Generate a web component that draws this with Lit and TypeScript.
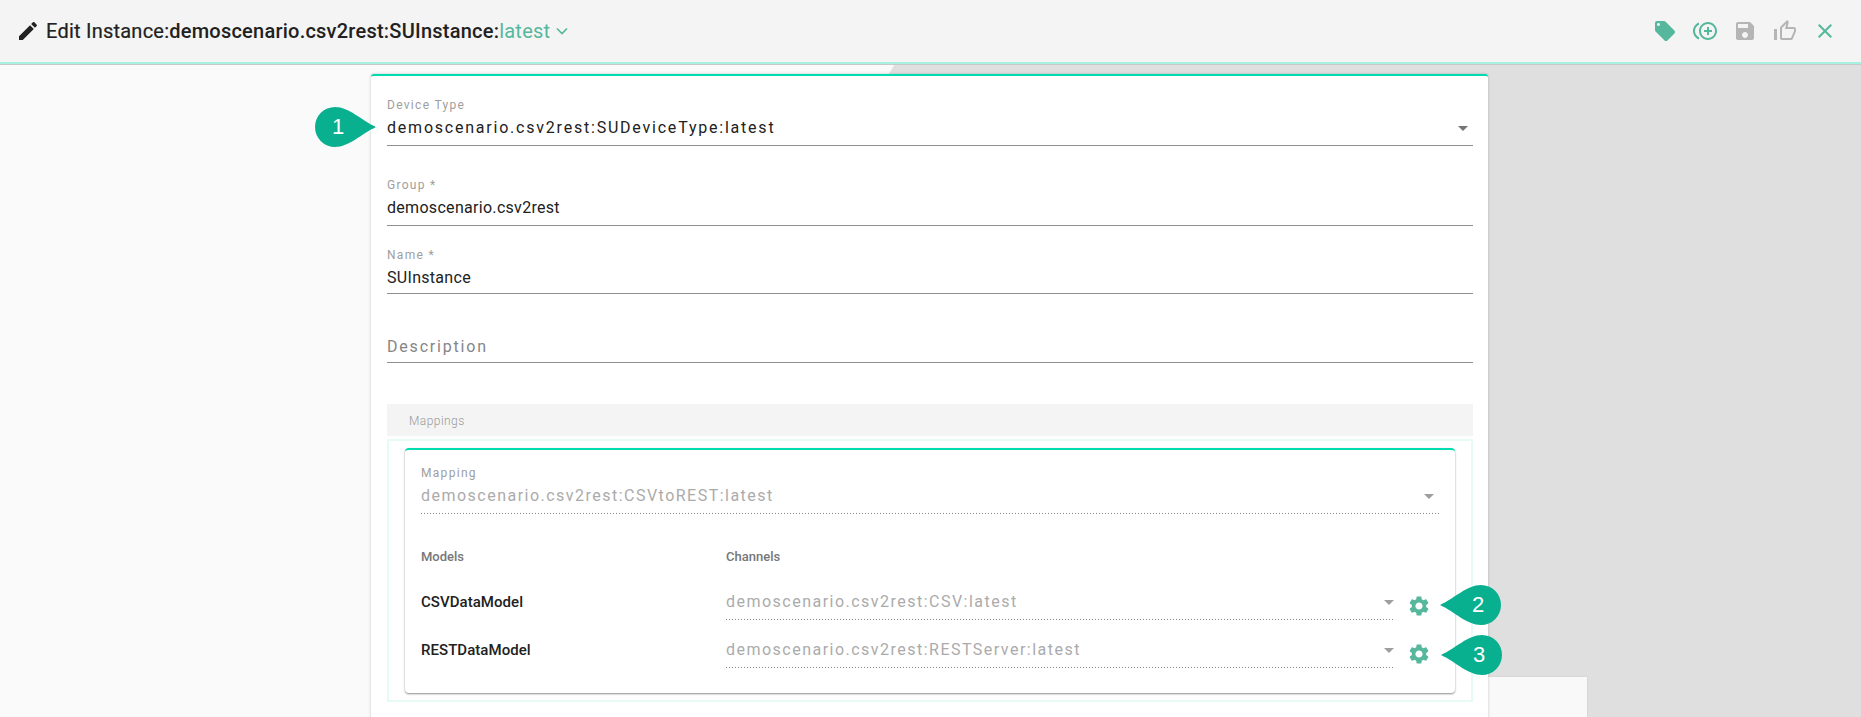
import { LitElement, html, css, svg } from "lit";
import { customElement } from "lit/decorators.js";

const P = {
  edit: "M3 17.25V21h3.75L17.81 9.94l-3.75-3.75L3 17.25zM20.71 7.04c.39-.39.39-1.02 0-1.41l-2.34-2.34c-.39-.39-1.02-.39-1.41 0l-1.83 1.83 3.75 3.75 1.83-1.83z",
  tag: "M21.41 11.58l-9-9C12.05 2.22 11.55 2 11 2H4c-1.1 0-2 .9-2 2v7c0 .55.22 1.05.59 1.42l9 9c.36.36.86.58 1.41.58.55 0 1.05-.22 1.41-.59l7-7c.37-.36.59-.86.59-1.41 0-.55-.23-1.06-.59-1.42zM5.5 7C4.67 7 4 6.33 4 5.5S4.67 4 5.5 4 7 4.67 7 5.5 6.33 7 5.5 7z",
  dup: "M16 8h-2v3h-3v2h3v3h2v-3h3v-2h-3zM2 12c0-2.79 1.64-5.2 4.01-6.32V3.52C2.52 4.76 0 8.09 0 12s2.52 7.24 6.01 8.48v-2.16C3.64 17.2 2 14.79 2 12zm13-9c-4.96 0-9 4.04-9 9s4.04 9 9 9 9-4.04 9-9-4.04-9-9-9zm0 16c-3.86 0-7-3.14-7-7s3.14-7 7-7 7 3.14 7 7-3.14 7-7 7z",
  save: "M17 3H5c-1.11 0-2 .9-2 2v14c0 1.1.89 2 2 2h14c1.1 0 2-.9 2-2V7l-4-4zm-5 16c-1.66 0-3-1.34-3-3s1.34-3 3-3 3 1.34 3 3-1.34 3-3 3zm3-10H5V5h10v4z",
  thumb: "M9 21h9c.83 0 1.54-.5 1.84-1.22l3.02-7.05c.09-.23.14-.47.14-.73v-2c0-1.1-.9-2-2-2h-6.31l.95-4.57.03-.32c0-.41-.17-.79-.44-1.06L14.17 1 7.58 7.59C7.22 7.95 7 8.45 7 9v10c0 1.1.9 2 2 2zM9 9l4.34-4.34L12 10h9v2l-3 7H9V9zM1 10h3v11H1z",
  close: "M19 6.41L17.59 5 12 10.59 6.41 5 5 6.41 10.59 12 5 17.59 6.41 19 12 13.41 17.59 19 19 17.59 13.41 12z",
  gear: "M19.14 12.94c.04-.3.06-.61.06-.94 0-.32-.02-.64-.07-.94l2.03-1.58c.18-.14.23-.41.12-.61l-1.92-3.32c-.12-.22-.37-.29-.59-.22l-2.39.96c-.5-.38-1.03-.7-1.62-.94l-.36-2.54c-.04-.24-.24-.41-.48-.41h-3.84c-.24 0-.43.17-.47.41l-.36 2.54c-.59.24-1.13.57-1.62.94l-2.39-.96c-.22-.08-.47 0-.59.22L2.74 8.87c-.12.21-.08.47.12.61l2.03 1.58c-.05.3-.09.63-.09.94s.02.64.07.94l-2.03 1.58c-.18.14-.23.41-.12.61l1.92 3.32c.12.22.37.29.59.22l2.39-.96c.5.38 1.03.7 1.62.94l.36 2.54c.05.24.24.41.48.41h3.84c.24 0 .44-.17.47-.41l.36-2.54c.59-.24 1.13-.56 1.62-.94l2.39.96c.22.08.47 0 .59-.22l1.92-3.32c.12-.22.07-.47-.12-.61l-2.01-1.58zM12 15.6c-1.98 0-3.6-1.62-3.6-3.6s1.62-3.6 3.6-3.6 3.6 1.62 3.6 3.6-1.62 3.6-3.6 3.6z",
};

const icon = (d: string, cls: string) => html`<svg class=${cls} viewBox="0 0 24 24">${svg`<path d=${d}></path>`}</svg>`;

const pin = (n: string, cls: string) => html`<div class="pin ${cls}">
  <svg viewBox="0 0 61 40"><path d="M20 0C34 0 46 13 61 20C46 27 34 40 20 40A20 20 0 0 1 20 0Z"></path></svg>
  <span>${n}</span>
</div>`;

@customElement("app-root")
export class AppRoot extends LitElement {
  static styles = css`
    :host { display: block; position: relative; width: 1861px; height: 717px; overflow: hidden; background: #dfdfdf; font-family: Roboto, "Liberation Sans", sans-serif; color: #212121; }
    .bg-left { position: absolute; left: 0; top: 0; width: 936px; height: 717px; background: #fafafa; clip-path: polygon(0 0, 100% 0, 477px 100%, 0 100%); }
    .bg-block { position: absolute; left: 1488px; top: 677px; width: 99px; height: 40px; background: #f9f9f9; box-shadow: 0 0 2px rgba(0,0,0,.1); }
    .head { position: relative; z-index: 2; height: 62px; box-sizing: content-box; border-bottom: 2px solid #a8f0df; background: #f4f4f4; display: flex; align-items: center; padding: 0 24px 0 16px; box-shadow: 0 1px 0 #c8c8c8; }
    .pencil { width: 24px; height: 24px; fill: #212121; margin-right: 6px; flex: none; }
    .title { font-size: 20px; font-weight: 400; line-height: 24px; white-space: nowrap; letter-spacing: .23px; color: #212121; -webkit-text-stroke: .2px #212121; }
    .title b { font-weight: 500; color: #212121; -webkit-text-stroke: 0; }
    .title .ver { color: #55b79b; font-weight: 400; -webkit-text-stroke: 0; }
    .chev { width: 20px; height: 20px; margin-left: 2px; fill: none; stroke: #55b79b; stroke-width: 1.6; }
    .actions { margin-left: auto; display: flex; gap: 16px; }
    .act { width: 24px; height: 24px; fill: #55b79b; }
    .act.off { fill: #b5b5b5; }
    .stage { position: relative; z-index: 1; padding: 10px 0 0 371px; }
    .card { width: 1117px; box-sizing: border-box; height: 700px; background: #fff; border-top: 2px solid #00dcb0; border-radius: 3px 3px 0 0; box-shadow: 0 0 3px rgba(0,0,0,.22); padding: 21px 15px 0 16px; }
    .field { border-bottom: 1px solid #8f8f8f; }
    .label { font-size: 12px; line-height: 16px; letter-spacing: 1.3px; color: #9e9e9e; }
    .value { display: flex; align-items: center; font-size: 16px; line-height: 22px; margin-top: 4px; padding-bottom: 6px; }
    .value span { flex: 1; }
    .sp { letter-spacing: 1.78px; }
    .g { letter-spacing: .3px; }
    .caret { width: 0; height: 0; border: 5px solid transparent; border-top-color: #757575; border-bottom: 0; margin-right: 5px; flex: none; }
    .f2 { margin-top: 31px; }
    .f3 { margin-top: 21px; }
    .f3 .value { padding-bottom: 4px; }
    .f4 { margin-top: 42px; }
    .f4 .value { margin: 0; color: #858585; letter-spacing: 1.8px; padding-bottom: 4px; }
    .bar { margin-top: 41px; height: 32px; background: #f4f4f4; line-height: 34px; font-size: 12px; padding-left: 22px; color: #9a9a9a; font-weight: 300; letter-spacing: .45px; }
    .box { margin-top: 3px; height: 263px; box-sizing: border-box; border: 2px solid #e6fbf5; padding: 7px 16px; }
    .inner { height: 245px; box-sizing: border-box; background: #fff; border-top: 2px solid #00dcb0; border-radius: 4px; box-shadow: 0 1px 2px rgba(0,0,0,.45); padding: 15px 16px 0; }
    .dis { background: linear-gradient(to right, #8a8a8a 1px, transparent 1px) left bottom / 3px 1px repeat-x; padding-bottom: 1px; }
    .dis .value { color: #ababab; letter-spacing: 1.48px; }
    .dis .caret { border-top-color: #9e9e9e; }
    .dis .label { color: #9e9e9e; }
    .grid { display: grid; grid-template-columns: 305px 669px 1fr; align-items: start; }
    .hd { font-size: 13px; font-weight: 500; color: #777; line-height: 18px; margin-top: 34px; height: 43px; }
    .rowname { font-size: 15px; font-weight: 500; color: #212121; line-height: 22px; letter-spacing: .05px; }
    .rowsel .value { margin-top: 0; padding-bottom: 6px; }
    .rowsel .caret { margin-right: 1px; }
    .rowsel { margin-bottom: 19px; }
    .gear { width: 24px; height: 24px; fill: #55b79b; margin: 3px 0 0 12px; display: block; }
    .pin { position: absolute; z-index: 3; width: 61px; height: 40px; }
    .pin svg { width: 61px; height: 40px; fill: #09b08f; display: block; }
    .pin span { position: absolute; top: 0; width: 46px; text-align: center; color: #fff; font: 22px/40px "Liberation Sans", Arial, sans-serif; }
    .pin.l span { left: 0; }
    .pin.r svg { transform: scaleX(-1); }
    .pin.r span { right: 0; }
    .p1 { left: 315px; top: 107px; }
    .p2 { left: 1440px; top: 585px; }
    .p3 { left: 1441px; top: 635px; }
  `;

  private row(name: string, val: string) {
    return html`
      <div class="rowname">${name}</div>
      <div class="dis rowsel"><div class="value"><span>${val}</span><i class="caret"></i></div></div>
      ${icon(P.gear, "gear")}
    `;
  }

  render() {
    return html`
      <div class="bg-left"></div>
      <div class="bg-block"></div>
      <header class="head">
        ${icon(P.edit, "pencil")}
        <div class="title">Edit Instance:<b>demoscenario.csv2rest:SUInstance:</b><span class="ver">latest</span></div>
        <svg class="chev" viewBox="0 0 20 20"><path d="M5 7.5l5 5 5-5"></path></svg>
        <div class="actions">
          ${icon(P.tag, "act")}
          ${icon(P.dup, "act")}
          ${icon(P.save, "act off")}
          ${icon(P.thumb, "act off")}
          ${icon(P.close, "act")}
        </div>
      </header>
      <main class="stage">
        <section class="card">
          <div class="field">
            <div class="label">Device Type</div>
            <div class="value sp"><span>demoscenario.csv2rest:SUDeviceType:latest</span><i class="caret"></i></div>
          </div>
          <div class="field f2">
            <div class="label">Group *</div>
            <div class="value g">demoscenario.csv2rest</div>
          </div>
          <div class="field f3">
            <div class="label">Name *</div>
            <div class="value g">SUInstance</div>
          </div>
          <div class="field f4">
            <div class="value">Description</div>
          </div>
          <div class="bar">Mappings</div>
          <div class="box">
            <div class="inner">
              <div class="dis">
                <div class="label">Mapping</div>
                <div class="value"><span>demoscenario.csv2rest:CSVtoREST:latest</span><i class="caret"></i></div>
              </div>
              <div class="grid">
                <div class="hd">Models</div>
                <div class="hd">Channels</div>
                <div></div>
                ${this.row("CSVDataModel", "demoscenario.csv2rest:CSV:latest")}
                ${this.row("RESTDataModel", "demoscenario.csv2rest:RESTServer:latest")}
              </div>
            </div>
          </div>
        </section>
      </main>
      ${pin("1", "l p1")}
      ${pin("2", "r p2")}
      ${pin("3", "r p3")}
    `;
  }
}
